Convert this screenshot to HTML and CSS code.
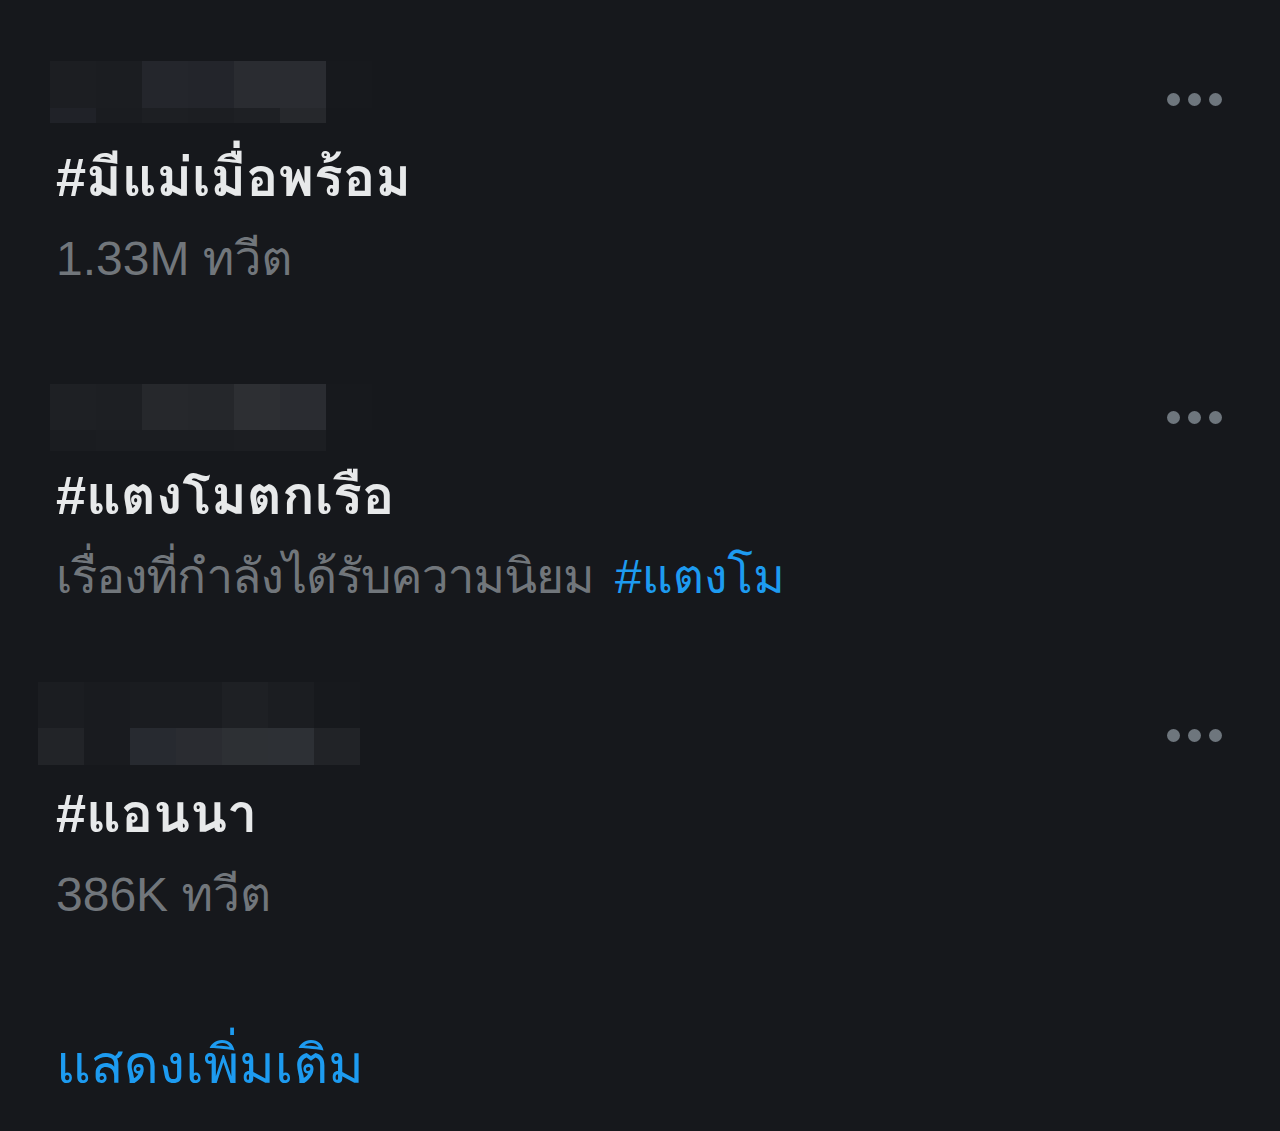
FILE: index.html
```html
<!DOCTYPE html>
<html lang="th">
<head>
<meta charset="utf-8">
<link rel="stylesheet" href="styles.css">
</head>
<body>
<div class="page">
  <div class="trend">
    <div class="trend-main">
      <div class="mosaic-slot">
        <div class="mosaic m1">
          <div class="row r-top"><span class="px a1"></span><span class="px a2"></span><span class="px a3"></span><span class="px a4"></span><span class="px a5"></span><span class="px a6"></span><span class="px f"></span></div>
          <div class="row r-bot"><span class="px b1"></span><span class="px b2"></span><span class="px b3"></span><span class="px b4"></span><span class="px b5"></span><span class="px b6"></span></div>
        </div>
      </div>
      <div class="title">#มีแม่เมื่อพร้อม</div>
      <div class="sub">1.33M ทวีต</div>
    </div>
    <div class="more"><span></span><span></span><span></span></div>
  </div>

  <div class="trend">
    <div class="trend-main">
      <div class="mosaic-slot">
        <div class="mosaic m2">
          <div class="row r-top"><span class="px c1"></span><span class="px c2"></span><span class="px c3"></span><span class="px c4"></span><span class="px c5"></span><span class="px c6"></span><span class="px f"></span></div>
          <div class="row r-bot"><span class="px d1"></span><span class="px d2"></span><span class="px d3"></span><span class="px d4"></span><span class="px d5"></span><span class="px d6"></span></div>
        </div>
      </div>
      <div class="title">#แตงโมตกเรือ</div>
      <div class="sub"><span class="reason">เรื่องที่กำลังได้รับความนิยม</span> <span class="link">#แตงโม</span></div>
    </div>
    <div class="more"><span></span><span></span><span></span></div>
  </div>

  <div class="trend">
    <div class="trend-main">
      <div class="mosaic-slot">
        <div class="mosaic m3">
          <div class="row r-top3"><span class="px e1"></span><span class="px e2"></span><span class="px e3"></span><span class="px e4"></span><span class="px e5"></span><span class="px e6"></span><span class="px e7"></span></div>
          <div class="row r-bot3"><span class="px g1"></span><span class="px g2"></span><span class="px g3"></span><span class="px g4"></span><span class="px g5"></span><span class="px g6"></span><span class="px g7"></span></div>
        </div>
      </div>
      <div class="title">#แอนนา</div>
      <div class="sub">386K ทวีต</div>
    </div>
    <div class="more"><span></span><span></span><span></span></div>
  </div>

  <div class="show-more">แสดงเพิ่มเติม</div>
</div>
</body>
</html>
```

FILE: styles.css
```css
html, body {
  margin: 0;
  padding: 0;
  background: #16181c;
}
body {
  font-family: "Liberation Sans", "Loma", sans-serif;
  width: 1280px;
  height: 1131px;
  overflow: hidden;
}
.page {
  padding: 61px 0 0 50px;
}
.trend {
  display: flex;
  justify-content: space-between;
  margin-bottom: 78px;
}
.trend-main {
  display: flex;
  flex-direction: column;
}
.mosaic-slot {
  height: 62px;
}
.mosaic {
  display: flex;
  flex-direction: column;
}
.m2 { margin-top: 5px; }
.m3 { margin-top: -15px; margin-left: -12px; }
.row {
  display: flex;
}
.px {
  width: 46px;
  display: block;
}
.r-top .px { height: 47px; }
.r-bot .px { height: 15px; }
.m2 .r-top .px { height: 46px; }
.m2 .r-bot .px { height: 21px; }
.r-top3 .px { height: 46px; }
.r-bot3 .px { height: 37px; }

.a1 { background: #1c1e22; } .a2 { background: #1b1d21; } .a3 { background: #24262c; }
.a4 { background: #23252b; } .a5 { background: #2a2c31; } .a6 { background: #2a2c31; }
.f { background: #17191d; }
.b1 { background: #202228; } .b2 { background: #1a1c20; } .b3 { background: #1d1f23; }
.b4 { background: #1c1e22; } .b5 { background: #1e2024; } .b6 { background: #26282c; }
.c1 { background: #1e2024; } .c2 { background: #1d1f23; } .c3 { background: #26282c; }
.c4 { background: #25272b; } .c5 { background: #2d2f33; } .c6 { background: #2a2c31; }
.d1 { background: #1a1c20; } .d2 { background: #1b1d21; } .d3 { background: #1b1d21; }
.d4 { background: #1b1d21; } .d5 { background: #1c1e22; } .d6 { background: #1c1e22; }
.e1 { background: #1b1d21; } .e2 { background: #191b1f; } .e3 { background: #1a1c20; }
.e4 { background: #1a1c20; } .e5 { background: #1e2024; } .e6 { background: #1b1d21; } .e7 { background: #17191d; }
.g1 { background: #222428; } .g2 { background: #191b1f; } .g3 { background: #272a30; }
.g4 { background: #2a2c31; } .g5 { background: #2d3034; } .g6 { background: #2d3035; } .g7 { background: #212327; }

.title {
  color: #e7e9ea;
  font-weight: 700;
  font-size: 54px;
  line-height: 80px;
  margin-top: 14px;
  padding-left: 6px;
  white-space: nowrap;
}
.sub {
  color: #71767b;
  font-size: 48px;
  line-height: 84px;
  padding-left: 6px;
  white-space: nowrap;
}
.reason {
  letter-spacing: -1px;
}
.link {
  color: #1d9bf0;
  padding-left: 8px;
}
.more {
  display: flex;
  gap: 8px;
  padding: 32px 58px 0 0;
}
.more span {
  width: 13px;
  height: 13px;
  border-radius: 50%;
  background: #6e767d;
}
.show-more {
  color: #1d9bf0;
  font-size: 54px;
  line-height: 80px;
  padding: 9px 0 0 6px;
  white-space: nowrap;
}
```
